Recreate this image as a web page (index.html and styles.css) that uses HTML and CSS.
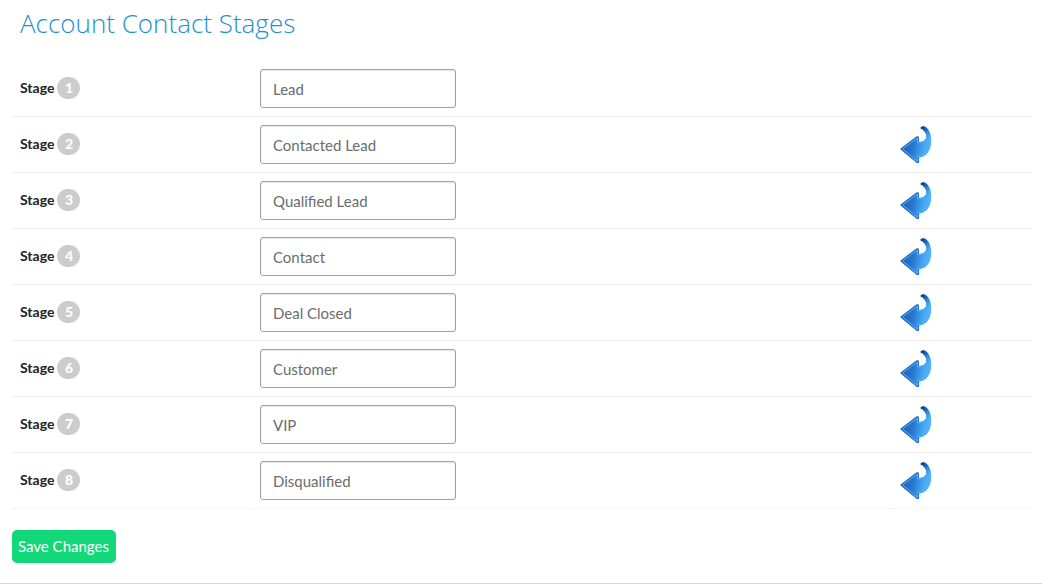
FILE: index.html
```html
<!DOCTYPE html>
<html lang="en">
<head>
  <meta charset="UTF-8">
  <meta name="viewport" content="width=device-width, initial-scale=1.0">
  <title>Account Contact Stages</title>
  <link rel="stylesheet" href="styles.css">
</head>
<body>

<!-- Shared arrow icon -->
<svg class="icon-defs" aria-hidden="true">
  <defs>
    <linearGradient id="arrow-fill" x1="0" y1="0.4" x2="1" y2="0.6">
      <stop offset="0" stop-color="#1c5cb4"/>
      <stop offset="0.4" stop-color="#2474cc"/>
      <stop offset="0.75" stop-color="#46a6f2"/>
      <stop offset="1" stop-color="#58b8fa"/>
    </linearGradient>
    <linearGradient id="arrow-tail" x1="0" y1="0" x2="0.5" y2="1">
      <stop offset="0" stop-color="#0c3480"/>
      <stop offset="0.35" stop-color="#1c62bc"/>
      <stop offset="1" stop-color="#4cacf4" stop-opacity="0"/>
    </linearGradient>
    <symbol id="arrow" viewBox="0 0 32 38">
      <path d="M0.2 23 L16.4 10.6 H18.6 V15.8 C22.6 15.8 25.4 14.4 26.2 11.6 C26.8 8.6 25 4.6 20.6 2.6 C20.2 1.2 21.4 0.2 23.8 0.2 C28.8 2 31.4 8 31.3 15.4 C31.1 24.2 27 30.6 19 31.4 V37 H17 Z" fill="url(#arrow-fill)"/>
      <path d="M26.2 11.6 C26.8 8.6 25 4.6 20.6 2.6 C20.2 1.2 21.4 0.2 23.8 0.2 C28.8 2 31.4 8 31.3 15.4 Q29 19 24 15 Q25.8 13.4 26.2 11.6 Z" fill="url(#arrow-tail)"/>
      <path d="M18.4 15.8 V11 H16.6 L0.8 23 L17 36.5 H18.6 V31" fill="none" stroke="#2468c4"/>
      <path d="M24.6 15.9 Q22 17 17.4 16.8 V11.8 L2.6 23 L17.6 35.4 V30.2 Q24 30 27.6 25.4" fill="none" stroke="#58b0f4"/>
    </symbol>
  </defs>
</svg>

<form class="stages">
  <h1>Account Contact Stages</h1>

  <table>
    <tr>
      <th scope="row"><label for="stage-1">Stage <span class="badge">1</span></label></th>
      <td><input type="text" id="stage-1" value="Lead"></td>
      <td></td>
    </tr>
    <tr>
      <th scope="row"><label for="stage-2">Stage <span class="badge">2</span></label></th>
      <td><input type="text" id="stage-2" value="Contacted Lead"></td>
      <td><button type="button" class="move" aria-label="Move stage 2 up"><svg><use href="#arrow"/></svg></button></td>
    </tr>
    <tr>
      <th scope="row"><label for="stage-3">Stage <span class="badge">3</span></label></th>
      <td><input type="text" id="stage-3" value="Qualified Lead"></td>
      <td><button type="button" class="move" aria-label="Move stage 3 up"><svg><use href="#arrow"/></svg></button></td>
    </tr>
    <tr>
      <th scope="row"><label for="stage-4">Stage <span class="badge">4</span></label></th>
      <td><input type="text" id="stage-4" value="Contact"></td>
      <td><button type="button" class="move" aria-label="Move stage 4 up"><svg><use href="#arrow"/></svg></button></td>
    </tr>
    <tr>
      <th scope="row"><label for="stage-5">Stage <span class="badge">5</span></label></th>
      <td><input type="text" id="stage-5" value="Deal Closed"></td>
      <td><button type="button" class="move" aria-label="Move stage 5 up"><svg><use href="#arrow"/></svg></button></td>
    </tr>
    <tr>
      <th scope="row"><label for="stage-6">Stage <span class="badge">6</span></label></th>
      <td><input type="text" id="stage-6" value="Customer"></td>
      <td><button type="button" class="move" aria-label="Move stage 6 up"><svg><use href="#arrow"/></svg></button></td>
    </tr>
    <tr>
      <th scope="row"><label for="stage-7">Stage <span class="badge">7</span></label></th>
      <td><input type="text" id="stage-7" value="VIP"></td>
      <td><button type="button" class="move" aria-label="Move stage 7 up"><svg><use href="#arrow"/></svg></button></td>
    </tr>
    <tr>
      <th scope="row"><label for="stage-8">Stage <span class="badge">8</span></label></th>
      <td><input type="text" id="stage-8" value="Disqualified"></td>
      <td><button type="button" class="move" aria-label="Move stage 8 up"><svg><use href="#arrow"/></svg></button></td>
    </tr>
  </table>

  <button type="submit" class="save">Save Changes</button>
</form>

</body>
</html>
```
FILE: styles.css
```css
* {
  box-sizing: border-box;
}

body {
  margin: 0;
  background-color: #fff;
  color: #222;
  font-family: Lato, sans-serif;
  font-size: 14px;
}

.icon-defs {
  display: block;
  width: 0;
  height: 0;
}

.stages {
  padding: 3px 11px 20px 12px;
  border-bottom: 1px solid #d8d8d8;
}

h1 {
  margin: 0 0 18px;
  padding: 0 8px;
  color: #1e8fcf;
  font-family: "Open Sans", sans-serif;
  font-size: 26px;
  font-weight: 300;
  line-height: 40px;
}

table {
  width: 100%;
  margin-bottom: 21px;
  border-spacing: 0;
  table-layout: fixed;
}

th,
td {
  height: 56px;
  padding: 0 8px;
  border-bottom: 1px solid #ebebeb;
  text-align: left;
  vertical-align: middle;
}

th {
  width: 240px;
  padding-bottom: 2px;
  font-weight: 700;
}

td:last-child {
  width: 140px;
  padding-left: 9px;
}

tr:last-child th,
tr:last-child td {
  border-bottom-style: dotted;
}

label {
  display: flex;
  align-items: center;
  gap: 3px;
}

.badge {
  width: 23px;
  border-radius: 11px;
  background-color: #ccc;
  color: #fff;
  font-weight: 900;
  line-height: 22px;
  text-align: center;
}

input {
  display: block;
  width: 196px;
  height: 39px;
  padding: 0 12px;
  border: 1px solid #a0a0a0;
  border-radius: 3px;
  box-shadow: inset 0 1px 2px rgba(0, 0, 0, 0.1);
  color: #6c6c6c;
  font-family: inherit;
  font-size: 15px;
}

.move {
  display: block;
  padding: 0;
  border: none;
  background: none;
  cursor: pointer;
}

.move svg {
  display: block;
  width: 32px;
  height: 38px;
}

.save {
  display: block;
  height: 33px;
  padding: 0 7px 1px 6px;
  border: none;
  border-radius: 5px;
  background-color: #12d879;
  color: #fff;
  font-family: inherit;
  font-size: 15px;
  cursor: pointer;
}
```
